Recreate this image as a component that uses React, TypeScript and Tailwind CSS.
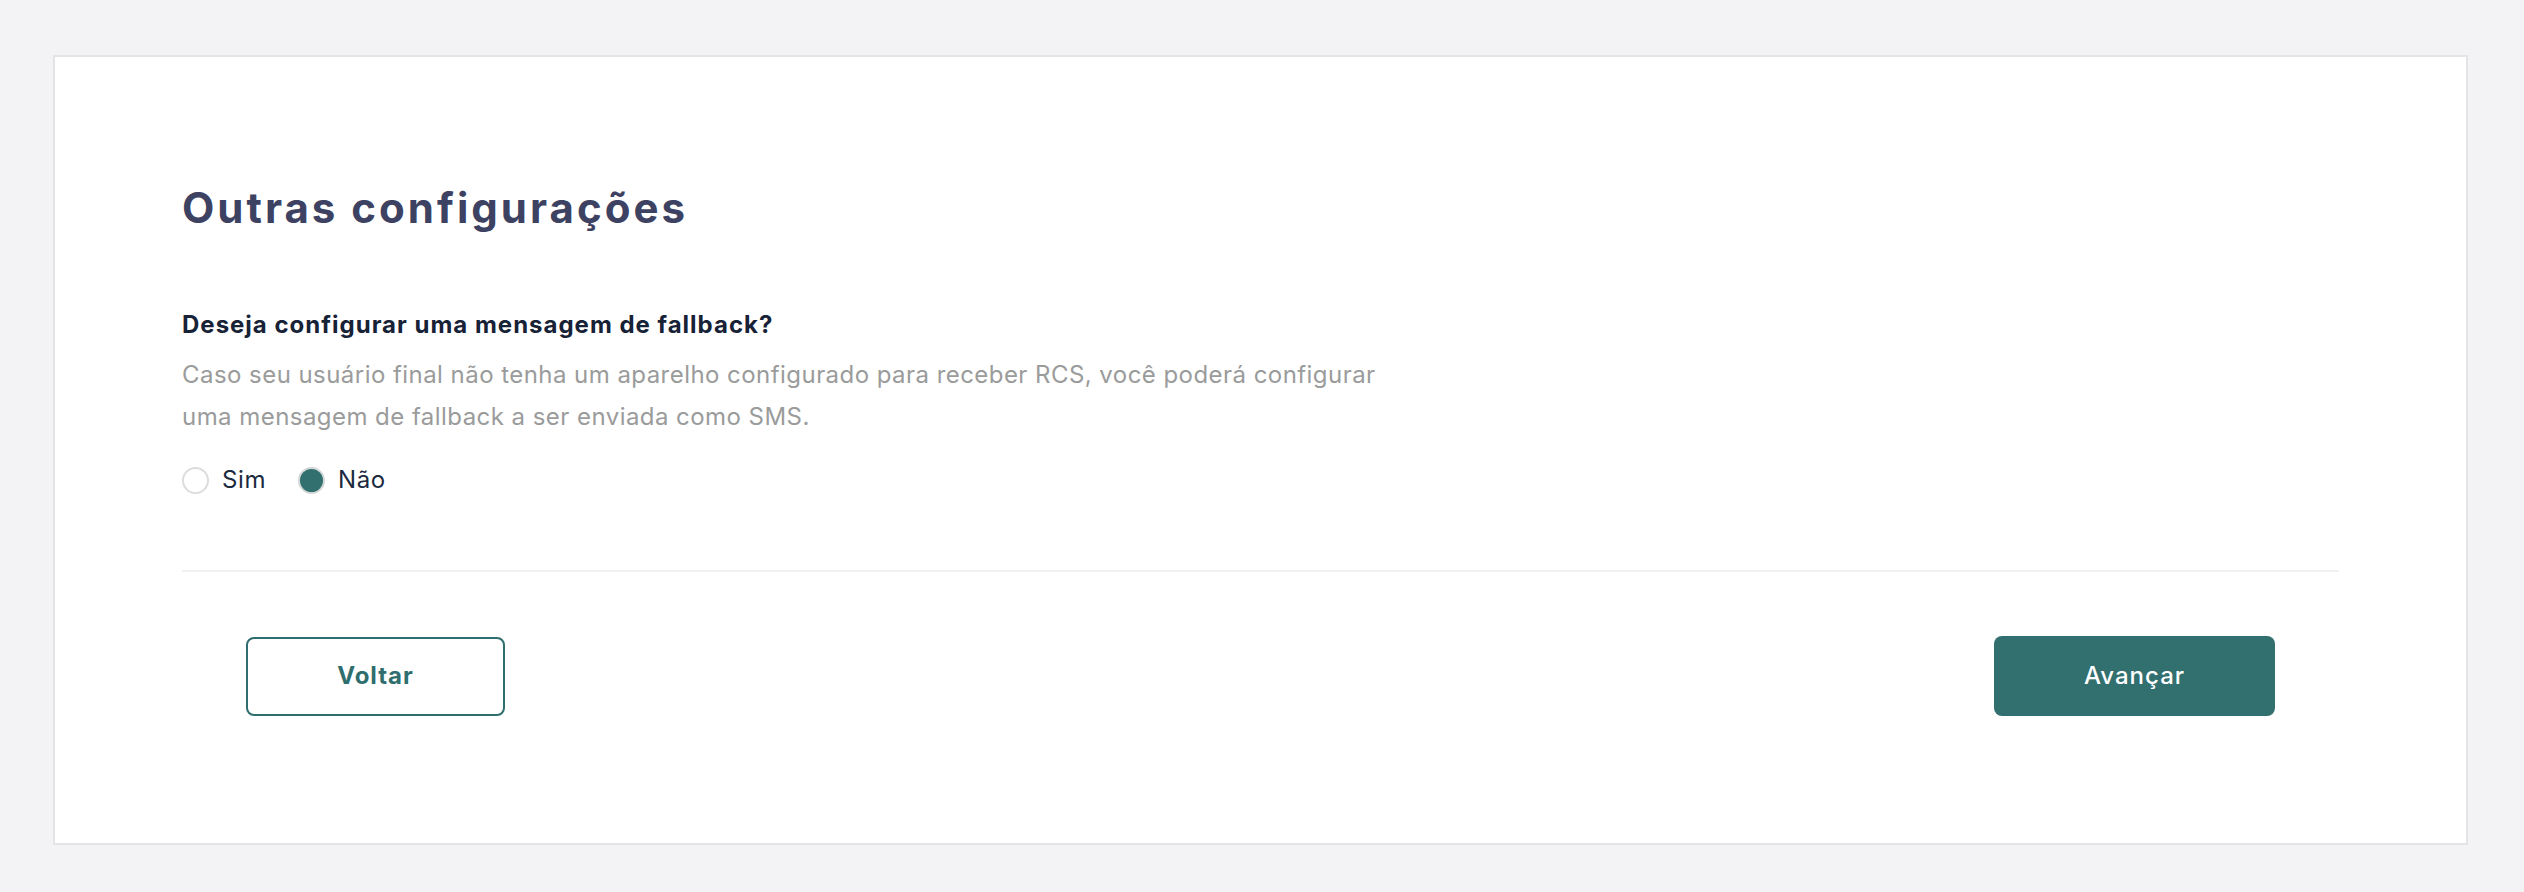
import React, { useState } from 'react';

const font = { fontFamily: 'Inter, "Noto Sans", sans-serif' };

type Option = 'sim' | 'nao';

const Radio: React.FC<{ label: string; checked: boolean; onSelect: () => void }> = ({ label, checked, onSelect }) => (
    <label className="flex items-center gap-[13px] cursor-pointer" onClick={onSelect}>
        <span
            className={`block w-[27px] h-[27px] rounded-full border-2 ${checked ? 'bg-[#326f6f] border-[#d4d7d7]' : 'bg-white border-[#dcdcdc]'}`}
        />
        <span className="text-[24px] leading-[28px] tracking-[0.6px] text-[#1b2a3f]">{label}</span>
    </label>
);

export default function App() {
    const [fallback, setFallback] = useState<Option>('nao');

    return (
        <div className="min-h-[892px] bg-[#f3f3f5] pl-[53px] pr-[56px] pt-[55px] pb-[47px]" style={font}>
            <div className="bg-white border-2 border-[#e4e4e7] pl-[127px] pr-[127px] pt-[127px] pb-[127px]">
                <h1 className="text-[42px] leading-[48px] font-bold text-[#3d4262] tracking-[3px]">Outras configurações</h1>

                <p className="mt-[77px] text-[24px] leading-[32px] font-bold text-[#172236] tracking-[1px]">
                    Deseja configurar uma mensagem de fallback?
                </p>
                <p className="mt-[13px] text-[24px] leading-[42px] text-[#9a9b9b] tracking-[0.45px]">
                    Caso seu usuário final não tenha um aparelho configurado para receber RCS, você poderá configurar
                    <br />
                    uma mensagem de fallback a ser enviada como SMS.
                </p>

                <div className="mt-[28px] flex items-center gap-[32px]">
                    <Radio label="Sim" checked={fallback === 'sim'} onSelect={() => setFallback('sim')} />
                    <Radio label="Não" checked={fallback === 'nao'} onSelect={() => setFallback('nao')} />
                </div>

                <div className="mt-[76px] h-[2px] bg-[#f1f1f2]" />

                <div className="mt-[64px] px-[64px] flex items-center justify-between">
                    <button className="w-[259px] h-[79px] rounded-[8px] border-2 border-[#2f6e6e] bg-white text-[#2f6e6e] text-[24px] font-bold tracking-[1px]">
                        Voltar
                    </button>
                    <button className="w-[281px] h-[80px] rounded-[8px] bg-[#326f6f] text-white text-[24px] font-medium tracking-[1px]">
                        Avançar
                    </button>
                </div>
            </div>
        </div>
    );
}
